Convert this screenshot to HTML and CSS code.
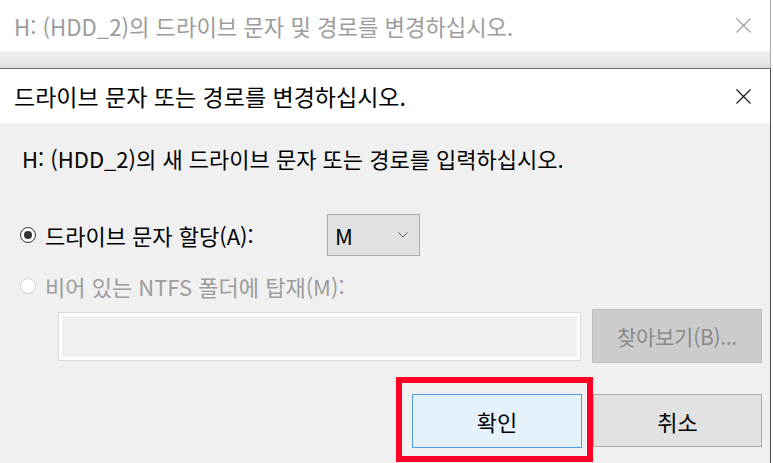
FILE: index.html
```html
<!DOCTYPE html>
<html lang="ko">
<head>
<meta charset="utf-8">
<title>드라이브 문자 또는 경로를 변경하십시오.</title>
<link rel="stylesheet" href="styles.css">
</head>
<body>
<div class="screen">
  <div class="back">
    <div class="back-title">
      <span class="back-text">H: (HDD_2)의 드라이브 문자 및 경로를 변경하십시오.</span>
      <svg class="close" width="15" height="15" viewBox="0 0 15 15"><path d="M0.5 0.5L14.5 14.5M14.5 0.5L0.5 14.5" stroke="#9a9a9a" stroke-width="1.1" fill="none"/></svg>
    </div>
    <div class="back-shade"></div>
  </div>
  <div class="dialog">
    <div class="title-bar">
      <span class="title-text">드라이브 문자 또는 경로를 변경하십시오.</span>
      <svg class="close" width="15" height="15" viewBox="0 0 15 15"><path d="M0.5 0.5L14.5 14.5M14.5 0.5L0.5 14.5" stroke="#111" stroke-width="1.1" fill="none"/></svg>
    </div>
    <div class="body">
      <p class="instruction">H: (HDD_2)의 새 드라이브 문자 또는 경로를 입력하십시오.</p>
      <div class="row-assign">
        <label class="radio-label">
          <span class="radio checked"></span>
          <span>드라이브 문자 할당(A):</span>
        </label>
        <div class="combo">
          <span>M</span>
          <svg width="10" height="6" viewBox="0 0 10 6"><path d="M0.5 0.5L5 5L9.5 0.5" stroke="#606060" stroke-width="1" fill="none"/></svg>
        </div>
      </div>
      <label class="radio-label disabled row-mount">
        <span class="radio"></span>
        <span>비어 있는 NTFS 폴더에 탑재(M):</span>
      </label>
      <div class="row-path">
        <div class="path-field"></div>
        <div class="btn btn-disabled">찾아보기(B)...</div>
      </div>
      <div class="row-buttons">
        <div class="btn btn-default">확인</div>
        <div class="btn">취소</div>
      </div>
    </div>
  </div>
  <div class="highlight"></div>
</div>
</body>
</html>
```

FILE: styles.css
```css
html, body {
  margin: 0;
  padding: 0;
  background: #ffffff;
}

.screen {
  position: relative;
  width: 773px;
  height: 463px;
  overflow: hidden;
  background: #ffffff;
  font-family: "Noto Sans CJK KR", "Noto Sans", sans-serif;
  color: #000;
}

.back {
  width: 770px;
  border-right: 1px solid #acacac;
}

.back-title {
  height: 51px;
  background: #ffffff;
  display: flex;
  align-items: center;
  justify-content: space-between;
  padding: 0 19px 0 14px;
}

.back-text {
  font-size: 22.2px;
  color: #9c9c9c;
}

.back-shade {
  height: 17px;
  background: linear-gradient(#f1f1f1, #e9e9e9 60%, #dcdcdc);
}

.dialog {
  width: 770px;
  height: 394px;
  border-top: 1px solid #6f6f6f;
  border-right: 1px solid #4f4f4f;
  background: #f0f0f0;
}

.title-bar {
  height: 54px;
  background: #ffffff;
  display: flex;
  align-items: center;
  justify-content: space-between;
  padding: 0 19px 0 14px;
}

.title-text {
  font-size: 23px;
  color: #000;
}

.close {
  display: block;
  flex: none;
}

.body {
  display: flex;
  flex-direction: column;
  padding: 20px 8px 0 20px;
}

.instruction {
  margin: 0 0 0 2px;
  height: 30px;
  line-height: 30px;
  font-size: 22px;
  color: #000;
}

.row-assign {
  margin-top: 41px;
  height: 42px;
  display: grid;
  grid-template-columns: 307px 93px;
  align-items: center;
}

.radio-label {
  display: flex;
  align-items: center;
  gap: 9px;
  font-size: 22px;
  line-height: 24px;
  color: #000;
}

.radio {
  position: relative;
  flex: none;
  width: 16px;
  height: 16px;
  box-sizing: border-box;
  border: 1px solid #333;
  border-radius: 50%;
  background: #fff;
}

.radio.checked::after {
  content: "";
  position: absolute;
  left: 3px;
  top: 3px;
  width: 8px;
  height: 8px;
  border-radius: 50%;
  background: #333;
}

.disabled {
  color: #9d9d9d;
}

.disabled .radio {
  border-color: #cfcfcf;
}

.row-mount {
  margin-top: 18px;
  height: 24px;
}

.combo {
  height: 42px;
  box-sizing: border-box;
  border: 1px solid #adadad;
  background: #e1e1e1;
  display: flex;
  align-items: center;
  justify-content: space-between;
  padding: 0 11px 0 7px;
  font-size: 22px;
}

.row-path {
  margin-top: 11px;
  height: 54px;
  display: flex;
  align-items: flex-start;
  gap: 11px;
  padding-left: 38px;
}

.path-field {
  margin-top: 3px;
  width: 523px;
  height: 49px;
  box-sizing: border-box;
  border: 1px solid #d9d9d9;
  outline: 3px solid #ffffff;
  outline-offset: -4px;
  background: #f0f0f0;
}

.btn {
  width: 169px;
  height: 53px;
  box-sizing: border-box;
  border: 1px solid #adadad;
  background: #e1e1e1;
  display: flex;
  align-items: center;
  justify-content: center;
  font-size: 22px;
  color: #000;
}

.btn-disabled {
  width: 170px;
  height: 54px;
  border-color: #bfbfbf;
  background: #cccccc;
  color: #8a8a8a;
  font-size: 21px;
  letter-spacing: -0.3px;
}

.row-buttons {
  margin-top: 31px;
  display: flex;
  justify-content: flex-end;
  gap: 11px;
}

.btn-default {
  width: 170px;
  height: 54px;
  border-color: #4a9ce6;
  background: #e5f1fb;
}

.highlight {
  position: absolute;
  left: 396px;
  top: 377px;
  width: 197px;
  height: 85px;
  box-sizing: border-box;
  border: 6px solid #ff0026;
}
```
